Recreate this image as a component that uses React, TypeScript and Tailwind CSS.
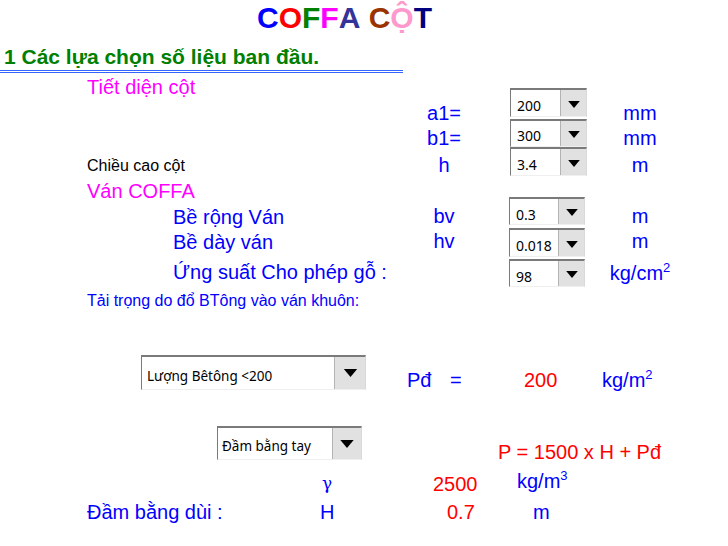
import React from "react";

type ComboProps = {
  value: string;
  box: string;
  arrow: string;
  text: string;
  triW: number;
  triH: number;
};

function Combo({ value, box, arrow, text, triW, triH }: ComboProps) {
  return (
    <div
      className={`flex shrink-0 border-t-2 border-l border-r border-b border-t-[#7a7a7a] border-l-[#7a7a7a] border-r-[#d9d9d9] border-b-[#efefef] bg-white ${box}`}
    >
      <div className={`flex-1 font-['Noto_Sans',sans-serif] leading-none text-black ${text}`}>{value}</div>
      <div className={`flex items-center justify-center border-l border-[#b3b3b3] bg-[#e1e1e1] ${arrow}`}>
        <svg width={triW} height={triH} viewBox="0 0 10 6">
          <polygon points="0,0 10,0 5,6" fill="#000" />
        </svg>
      </div>
    </div>
  );
}

const small = "h-full w-[77px]";

export default function App() {
  return (
    <div className="h-[546px] w-[728px] overflow-hidden bg-white font-['Liberation_Sans',Arial,sans-serif]">
      {/* title */}
      <div className="flex h-[36px] items-center pl-[257px] text-[30px] font-bold leading-none">
        <span className="text-[#0000ff]">C</span>
        <span className="text-[#ff0000]">O</span>
        <span className="text-[#008000]">F</span>
        <span className="text-[#ff00ff]">F</span>
        <span className="text-[#333399]">A</span>
        <span>&nbsp;</span>
        <span className="text-[#993300]">C</span>
        <span className="text-[#ff99cc]">Ộ</span>
        <span className="text-[#000080]">T</span>
      </div>

      <div className="h-[34px] pl-[4px] pt-[10px] text-[21px] font-bold leading-none text-[#008000]">
        1 Các lựa chọn số liệu ban đầu.
      </div>
      <div className="h-[3px] w-[403px] border-y border-[#3366ff]" />

      {/* a1 */}
      <div className="flex h-[45px] items-start text-[20px] leading-none">
        <div className="mt-[4px] w-[404px] shrink-0 pl-[87px] text-[#ff00ff]">Tiết diện cột</div>
        <div className="mt-[30px] w-[80px] shrink-0 text-center text-[#0000ff]">a1=</div>
        <div className="mt-[15px] h-[29px] w-[116px] shrink-0 pl-[26px]">
          <Combo value="200" box={small} arrow="w-[26px] pt-[2px]" text="pl-[6px] pt-[9px] text-[14px]" triW={12} triH={7} />
        </div>
        <div className="mt-[30px] w-[80px] shrink-0 text-center text-[#0000ff]">mm</div>
      </div>

      {/* b1 */}
      <div className="flex h-[29px] items-start text-[20px] leading-none">
        <div className="w-[404px] shrink-0" />
        <div className="mt-[10px] w-[80px] shrink-0 text-center text-[#0000ff]">b1=</div>
        <div className="mt-[1px] h-[28px] w-[116px] shrink-0 pl-[26px]">
          <Combo value="300" box={small} arrow="w-[26px] pt-[2px]" text="pl-[6px] pt-[8px] text-[14px]" triW={12} triH={7} />
        </div>
        <div className="mt-[10px] w-[80px] shrink-0 text-center text-[#0000ff]">mm</div>
      </div>

      {/* h */}
      <div className="flex h-[29px] items-start text-[20px] leading-none">
        <div className="mt-[11px] w-[404px] shrink-0 pl-[87px] text-[16px] text-black">Chiều cao cột</div>
        <div className="mt-[8px] w-[80px] shrink-0 text-center text-[#0000ff]">h</div>
        <div className="h-[29px] w-[116px] shrink-0 pl-[26px]">
          <Combo value="3.4" box={small} arrow="w-[26px] pt-[2px]" text="pl-[6px] pt-[9px] text-[14px]" triW={12} triH={7} />
        </div>
        <div className="mt-[8px] w-[80px] shrink-0 text-center text-[#0000ff]">m</div>
      </div>

      {/* Ván COFFA */}
      <div className="h-[21px] pl-[87px] pt-[5px] text-[20px] leading-none text-[#ff00ff]">Ván COFFA</div>

      {/* bv */}
      <div className="flex h-[30px] items-start text-[20px] leading-none text-[#0000ff]">
        <div className="mt-[10px] w-[404px] shrink-0 pl-[173px]">Bề rộng Ván</div>
        <div className="mt-[9px] w-[80px] shrink-0 text-center">bv</div>
        <div className="h-[28px] w-[116px] shrink-0 pl-[25px]">
          <Combo value="0.3" box="h-full w-[76px]" arrow="w-[26px] pt-[2px]" text="pl-[6px] pt-[9px] text-[14px]" triW={12} triH={7} />
        </div>
        <div className="mt-[9px] w-[80px] shrink-0 text-center">m</div>
      </div>

      {/* hv */}
      <div className="flex h-[31px] items-start text-[20px] leading-none text-[#0000ff]">
        <div className="mt-[5px] w-[404px] shrink-0 pl-[173px]">Bề dày ván</div>
        <div className="mt-[4px] w-[80px] shrink-0 text-center">hv</div>
        <div className="mt-[1px] h-[29px] w-[116px] shrink-0 pl-[25px]">
          <Combo value="0.018" box="h-full w-[76px]" arrow="w-[26px] pt-[2px]" text="pl-[6px] pt-[9px] text-[14px]" triW={12} triH={7} />
        </div>
        <div className="mt-[4px] w-[80px] shrink-0 text-center">m</div>
      </div>

      {/* ứng suất */}
      <div className="flex h-[30px] items-start text-[20px] leading-none text-[#0000ff]">
        <div className="mt-[4px] w-[484px] shrink-0 pl-[173px]">Ứng suất Cho phép gỗ :</div>
        <div className="mt-[1px] h-[28px] w-[116px] shrink-0 pl-[25px]">
          <Combo value="98" box="h-full w-[76px]" arrow="w-[26px] pt-[2px]" text="pl-[6px] pt-[9px] text-[14px]" triW={12} triH={7} />
        </div>
        <div className="mt-[5px] w-[80px] shrink-0 text-center">
          kg/cm<sup className="-top-[8px] text-[13px]">2</sup>
        </div>
      </div>

      <div className="h-[32px] pl-[87px] pt-[5px] text-[16px] leading-none text-[#0000ff]">
        Tải trọng do đổ BTông vào ván khuôn:
      </div>

      {/* Pđ */}
      <div className="flex h-[70px] items-start pl-[141px] text-[20px] leading-none">
        <div className="mt-[35px] h-[35px] w-[266px] shrink-0">
          <Combo value="Lượng Bêtông <200" box="h-full w-[225px]" arrow="w-[31px]" text="pl-[5px] pt-[13px] text-[13.5px]" triW={15} triH={8} />
        </div>
        <div className="mt-[50px] w-[43px] shrink-0 text-[#0000ff]">Pđ</div>
        <div className="mt-[50px] w-[74px] shrink-0 text-[#0000ff]">=</div>
        <div className="mt-[50px] w-[78px] shrink-0 text-[#ff0000]">200</div>
        <div className="mt-[50px] shrink-0 text-[#0000ff]">
          kg/m<sup className="-top-[8px] text-[13px]">2</sup>
        </div>
      </div>

      {/* Đầm bằng tay */}
      <div className="flex h-[70px] items-start pl-[217px] text-[20px] leading-none">
        <div className="mt-[36px] h-[34px] w-[281px] shrink-0">
          <Combo value="Đầm bằng tay" box="h-full w-[145px]" arrow="w-[29px]" text="pl-[4px] pt-[12px] text-[13.5px]" triW={14} triH={8} />
        </div>
        <div className="mt-[52px] shrink-0 text-[#ff0000]">P = 1500 x H + Pđ</div>
      </div>

      {/* gamma */}
      <div className="flex h-[40px] items-start pl-[322px] leading-none">
        <div className="mt-[15px] w-[111px] shrink-0 font-['DejaVu_Serif',serif] text-[17px] text-[#0000ff]">γ</div>
        <div className="mt-[14px] w-[84px] shrink-0 text-[20px] text-[#ff0000]">2500</div>
        <div className="mt-[11px] shrink-0 text-[20px] text-[#0000ff]">
          kg/m<sup className="-top-[8px] text-[13px]">3</sup>
        </div>
      </div>

      {/* Đầm bằng dùi */}
      <div className="flex items-start pl-[87px] pt-[2px] text-[20px] leading-none">
        <div className="w-[233px] shrink-0 text-[#0000ff]">Đầm bằng dùi :</div>
        <div className="w-[127px] shrink-0 text-[#0000ff]">H</div>
        <div className="w-[86px] shrink-0 text-[#ff0000]">0.7</div>
        <div className="shrink-0 text-[#0000ff]">m</div>
      </div>
    </div>
  );
}
